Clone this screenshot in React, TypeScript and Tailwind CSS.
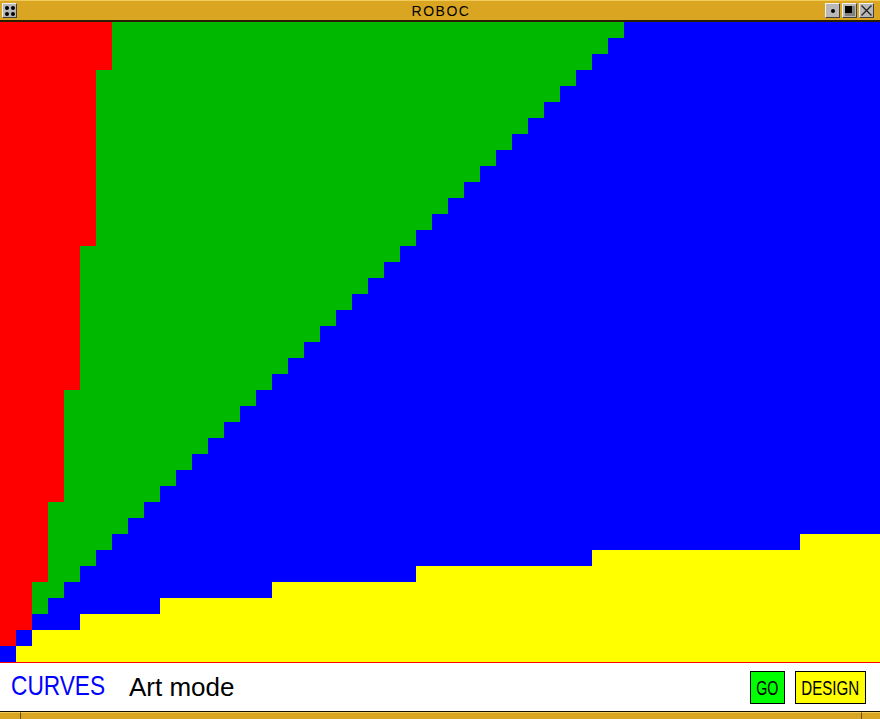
import React from 'react';

// cells are 16px; canvas is 55 x 40
const COLS = 55;
const ROWS = 40;

const redWidth = (r: number) => {
  if (r <= 2) return 7;
  if (r <= 13) return 6;
  if (r <= 22) return 5;
  if (r <= 29) return 4;
  if (r <= 34) return 3;
  if (r <= 37) return 2;
  if (r === 38) return 1;
  return 0;
};

const yellowStart: Record<number, number> = {
  32: 50,
  33: 37,
  34: 26,
  35: 17,
  36: 10,
  37: 5,
  38: 2,
  39: 1,
};

const CanvasRow = ({ r }: { r: number }) => {
  const red = redWidth(r);
  const green = Math.max(red, 39 - r);
  const yellow = yellowStart[r] ?? COLS;
  return (
    <div className="flex h-4">
      <div className="bg-[#ff0000] h-full" style={{ width: red * 16 }} />
      <div className="bg-[#00b800] h-full" style={{ width: (green - red) * 16 }} />
      <div className="bg-[#0000ff] h-full" style={{ width: (yellow - green) * 16 }} />
      <div className="bg-[#ffff00] h-full" style={{ width: (COLS - yellow) * 16 }} />
    </div>
  );
};

const WinButton = ({ children }: { children: React.ReactNode }) => (
  <div className="w-[15px] h-[15px] bg-[#b8b8b8] border border-t-[#f0f0f0] border-l-[#f0f0f0] border-b-[#404040] border-r-[#404040] flex items-center justify-center">
    {children}
  </div>
);

export default function App() {
  return (
    <div className="w-[880px] h-[719px] overflow-hidden bg-white flex flex-col" style={{ fontFamily: '"Liberation Sans", Arial, sans-serif' }}>
      {/* title bar */}
      <div className="h-[22px] shrink-0 bg-[#daa520] border-t border-t-[#f2cc5a] border-b-2 border-b-[#2a1e00] flex items-center px-[2px] relative">
        <WinButton>
          <div className="grid grid-cols-2 gap-[2px]">
            <div className="w-[4px] h-[4px] rounded-full bg-black" />
            <div className="w-[4px] h-[4px] rounded-full bg-black" />
            <div className="w-[4px] h-[4px] rounded-full bg-black" />
            <div className="w-[4px] h-[4px] rounded-full bg-black" />
          </div>
        </WinButton>
        <div className="flex-1 text-center text-[14px] leading-none tracking-[1.5px] text-black pl-[40px]">
          ROBOC
        </div>
        <div className="flex gap-[2px] pr-[4px]">
          <WinButton>
            <div className="w-[4px] h-[4px] rounded-full bg-black" />
          </WinButton>
          <WinButton>
            <div className="w-[10px] h-[10px] bg-black border-r-[3px] border-b-[3px] border-r-[#808080] border-b-[#808080]" />
          </WinButton>
          <WinButton>
            <svg width="11" height="11" viewBox="0 0 11 11">
              <path d="M0.5 0.5 L10.5 10.5 M10.5 0.5 L0.5 10.5" stroke="#202020" strokeWidth="1.3" />
            </svg>
          </WinButton>
        </div>
      </div>

      {/* drawing */}
      <div className="shrink-0 flex flex-col">
        {Array.from({ length: ROWS }, (_, r) => (
          <CanvasRow key={r} r={r} />
        ))}
      </div>

      {/* status line */}
      <div className="h-[49px] shrink-0 border-t border-t-[#ff0000] flex items-center pl-[11px] pr-[14px]">
        <span className="w-[100px] inline-block">
          <span className="text-[#0000ff] text-[28px] leading-none scale-x-[0.81] origin-left inline-block">CURVES</span>
        </span>
        <span className="text-black text-[26px] leading-none ml-[18px]">Art mode</span>
        <div className="ml-auto flex gap-[10px] items-center">
          <div className="w-[35px] h-[33px] bg-[#00ff00] border border-black flex items-center justify-center overflow-hidden">
            <span className="text-[21px] leading-none scale-x-[0.68] inline-block">GO</span>
          </div>
          <div className="w-[71px] h-[33px] bg-[#ffff00] border border-black flex items-center justify-center overflow-hidden">
            <span className="text-[21px] leading-none scale-x-[0.72] inline-block">DESIGN</span>
          </div>
        </div>
      </div>

      {/* bottom frame */}
      <div className="flex-1 border-t border-t-[#1a1200] bg-[#daa520] flex">
        <div className="w-[21px] border-r border-r-[#6b4e00] border-t border-t-[#f2cc5a]" />
        <div className="flex-1 border-t border-t-[#f2cc5a]" />
        <div className="w-[19px] border-l border-l-[#6b4e00] border-t border-t-[#f2cc5a]" />
      </div>
    </div>
  );
}
